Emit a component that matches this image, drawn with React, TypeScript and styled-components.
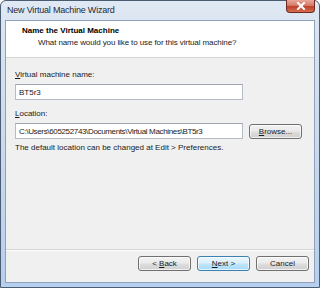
import React from "react";
import styled, { createGlobalStyle } from "styled-components";

const Global = createGlobalStyle`
  html, body { margin: 0; padding: 0; background: #ffffff; }
  body { font-family: "Liberation Sans", Arial, sans-serif; }
  #root { width: 320px; height: 288px; }
`;

const Window = styled.div`
  box-sizing: border-box;
  width: 320px;
  height: 288px;
  border: 1px solid #4a5d73;
  border-radius: 6px 6px 0 0;
  background: linear-gradient(to bottom, #dfe8f3 0%, #cfdcec 40%, #b6cfee 100%);
  display: flex;
  flex-direction: column;
  padding: 0 4px 4px 4px;
`;

const TitleBar = styled.div`
  height: 19px;
  display: flex;
  align-items: flex-start;
  justify-content: space-between;
`;

const TitleText = styled.div`
  font-family: "Liberation Sans", Arial, sans-serif;
  font-size: 9px;
  letter-spacing: -0.2px;
  color: #1e2a38;
  padding: 4px 0 0 2px;
`;

const CloseButton = styled.div`
  box-sizing: border-box;
  width: 29px;
  height: 13px;
  margin-top: -1px;
  border: 1px solid #6e2a22;
  border-top: none;
  border-radius: 0 0 4px 4px;
  background: linear-gradient(to bottom, #e9a99c 0%, #d67a66 45%, #c0402a 55%, #d3704f 100%);
  display: flex;
  align-items: center;
  justify-content: center;
`;

const Client = styled.div`
  flex: 1;
  display: flex;
  flex-direction: column;
  border: 1px solid #8ea3bb;
  background: #f0f0f0;
  font-size: 8px;
  color: #1a1a1a;
`;

const Header = styled.div`
  height: 37px;
  box-sizing: border-box;
  background: #ffffff;
  border-bottom: 1px solid #d5d5d5;
  padding: 4px 0 0 16px;
`;

const HeaderTitle = styled.div`
  font-weight: bold;
  font-size: 8px;
  line-height: 11px;
  color: #000;
`;

const HeaderSub = styled.div`
  font-size: 8px;
  line-height: 11px;
  letter-spacing: -0.1px;
  padding-left: 16px;
  margin-top: 1px;
`;

const Body = styled.div`
  flex: 1;
  padding: 12px 0 0 9px;
  display: flex;
  flex-direction: column;
`;

const Label = styled.div<{ $top?: number }>`
  line-height: 10px;
  margin-top: ${(p) => p.$top ?? 0}px;
`;

const Row = styled.div`
  display: flex;
  align-items: center;
  gap: 6px;
  margin-top: 4px;
`;

const TextBox = styled.div<{ $tight?: boolean }>`
  box-sizing: border-box;
  width: 228px;
  height: 16px;
  background: #fff;
  border: 1px solid #b5bcc6;
  border-top-color: #9ea5af;
  padding: 0 3px;
  display: flex;
  align-items: center;
  font-size: 8px;
  letter-spacing: ${(p) => (p.$tight ? "-0.35px" : "0")};
  white-space: nowrap;
  overflow: hidden;
`;

const Button = styled.div<{ $default?: boolean }>`
  box-sizing: border-box;
  width: 53px;
  height: 15px;
  border: 1px solid ${(p) => (p.$default ? "#3c7fb1" : "#707070")};
  border-radius: 3px;
  background: ${(p) =>
    p.$default
      ? "linear-gradient(to bottom, #eaf6fd 0%, #d9f0fc 45%, #bee6fd 55%, #a7d9f5 100%)"
      : "linear-gradient(to bottom, #f2f2f2 0%, #ebebeb 45%, #dddddd 55%, #cfcfcf 100%)"};
  box-shadow: inset 0 0 0 1px rgba(255, 255, 255, 0.7);
  display: flex;
  align-items: center;
  justify-content: center;
  font-size: 8px;
  color: #1a1a1a;
`;

const Hint = styled.div`
  margin-top: 4px;
  line-height: 10px;
`;

const Footer = styled.div`
  height: 26px;
  border-top: 1px solid #d5d5d5;
  box-shadow: inset 0 1px 0 #ffffff;
  display: flex;
  justify-content: flex-end;
  align-items: flex-start;
  gap: 6px;
  padding: 6px 5px 0 0;
`;

const U = styled.span`
  text-decoration: underline;
`;

export default function App() {
  return (
    <>
      <Global />
      <Window>
        <TitleBar>
          <TitleText>New Virtual Machine Wizard</TitleText>
          <CloseButton>
            <svg width="10" height="8" viewBox="0 0 10 8">
              <path d="M2 1 L8 7 M8 1 L2 7" stroke="#ffffff" strokeWidth="2" strokeLinecap="square" />
            </svg>
          </CloseButton>
        </TitleBar>
        <Client>
          <Header>
            <HeaderTitle>Name the Virtual Machine</HeaderTitle>
            <HeaderSub>What name would you like to use for this virtual machine?</HeaderSub>
          </Header>
          <Body>
            <Label>
              <U>V</U>irtual machine name:
            </Label>
            <Row>
              <TextBox>BT5r3</TextBox>
            </Row>
            <Label $top={9}>
              <U>L</U>ocation:
            </Label>
            <Row>
              <TextBox $tight>C:\Users\605252743\Documents\Virtual Machines\BT5r3</TextBox>
              <Button>
                <span>
                  <U>B</U>rowse...
                </span>
              </Button>
            </Row>
            <Hint>The default location can be changed at Edit &gt; Preferences.</Hint>
          </Body>
          <Footer>
            <Button>
              <span>
                &lt; <U>B</U>ack
              </span>
            </Button>
            <Button $default>
              <span>
                <U>N</U>ext &gt;
              </span>
            </Button>
            <Button>Cancel</Button>
          </Footer>
        </Client>
      </Window>
    </>
  );
}
